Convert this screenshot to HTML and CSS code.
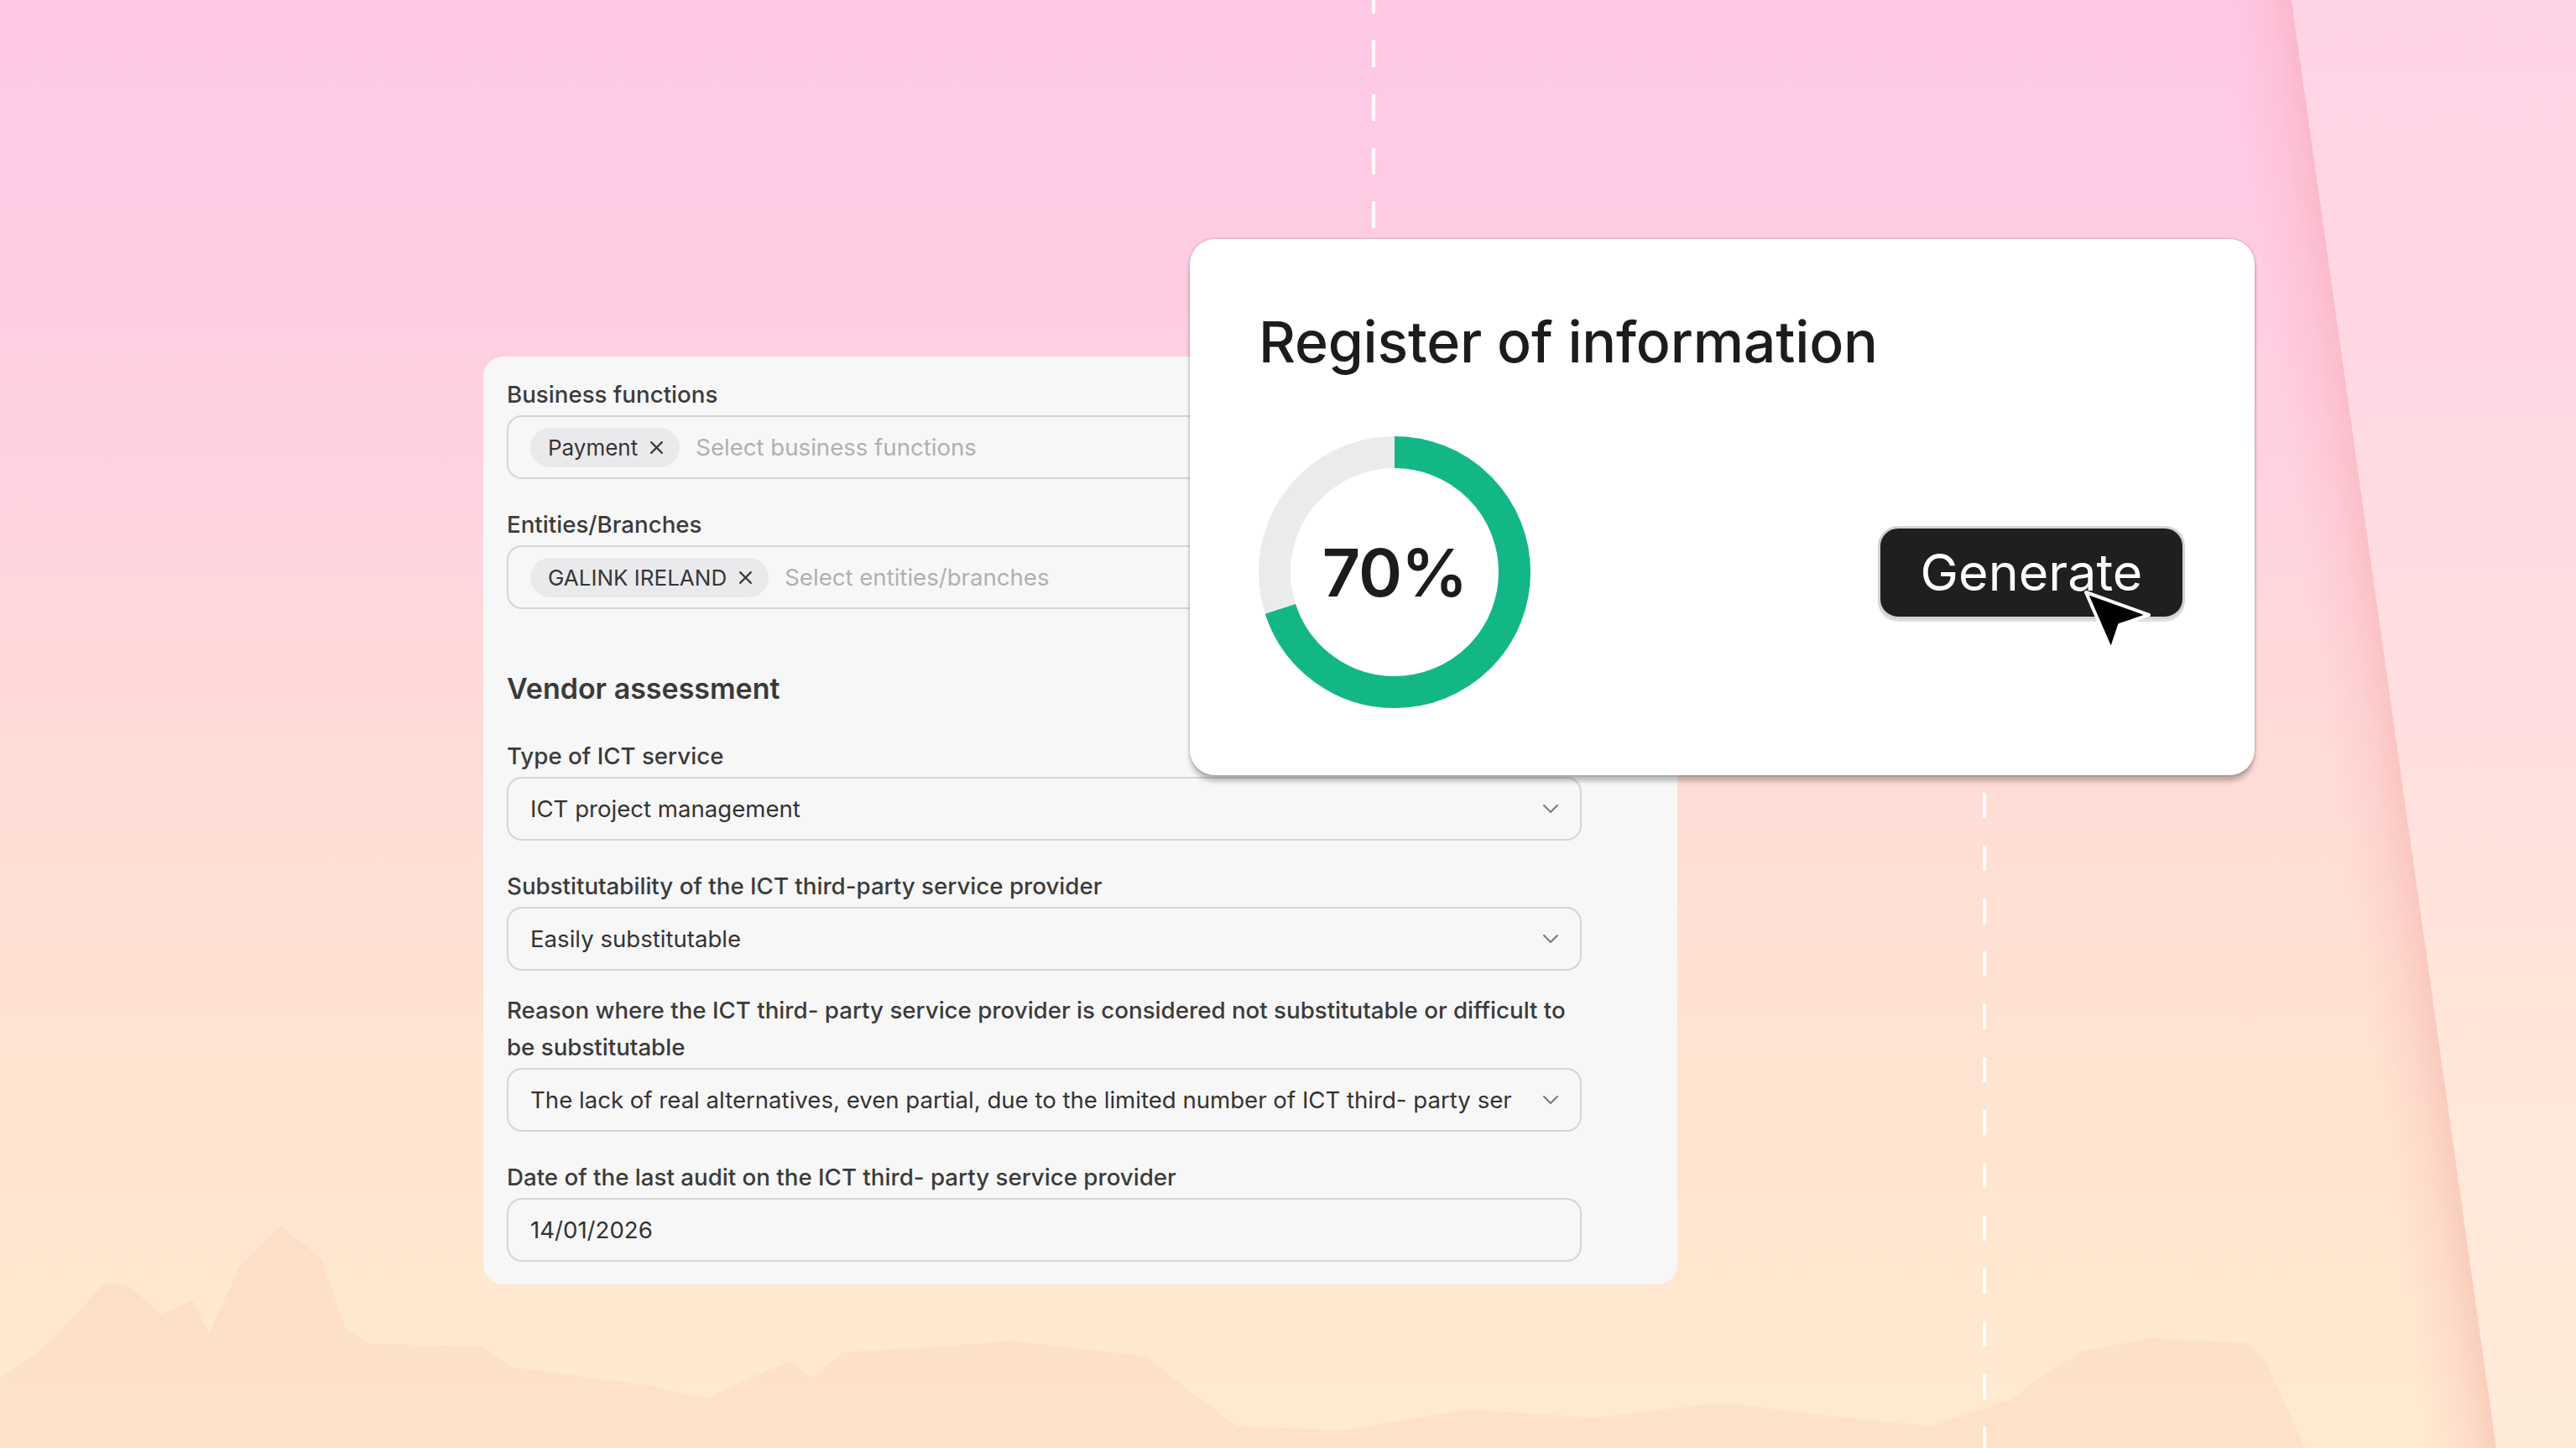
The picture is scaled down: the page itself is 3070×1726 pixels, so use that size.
FILE: index.html
```html
<!DOCTYPE html>
<html lang="en">
<head>
<meta charset="utf-8">
<title>Register of information</title>
<link rel="stylesheet" href="styles.css">
</head>
<body>
<div class="scene">
  <div class="bg-edge"></div>
  <div class="bg-light"></div>
  <svg class="mountains" viewBox="0 0 3070 1726" preserveAspectRatio="none" aria-hidden="true">
    <path d="M0 1643 L57 1602 L124 1530 L153 1532 L191 1567 L230 1550 L249 1590 L287 1507 L335 1462 L383 1500 L411 1583 L440 1602 L574 1605 L612 1630 L766 1650 L842 1667 L900 1640 L943 1622 L967 1643 L1005 1612 L1148 1603 L1206 1598 L1368 1617 L1416 1657 L1474 1700 L1600 1705 L1750 1680 L1900 1690 L2050 1672 L2200 1690 L2300 1700 L2396 1669 L2423 1648 L2480 1611 L2522 1603 L2564 1595 L2679 1601 L2700 1622 L2747 1726 L0 1726 Z"/>
  </svg>
  <div class="dash dash-top"></div>
  <div class="dash dash-bottom"></div>

  <section class="form-panel">
    <div class="field">
      <label class="field-label">Business functions</label>
      <div class="input">
        <span class="chip">Payment
          <svg class="chip-x" viewBox="0 0 16 16"><path d="M2 2 L14 14 M14 2 L2 14"/></svg>
        </span>
        <span class="placeholder">Select business functions</span>
      </div>
    </div>
    <div class="field">
      <label class="field-label">Entities/Branches</label>
      <div class="input">
        <span class="chip">GALINK IRELAND
          <svg class="chip-x" viewBox="0 0 16 16"><path d="M2 2 L14 14 M14 2 L2 14"/></svg>
        </span>
        <span class="placeholder">Select entities/branches</span>
      </div>
    </div>

    <h2 class="section-title">Vendor assessment</h2>

    <div class="field field-first">
      <label class="field-label">Type of ICT service</label>
      <div class="input select">
        <span class="value">ICT project management</span>
        <svg class="chevron" viewBox="0 0 18 10"><path d="M1 1 L9 9 L17 1"/></svg>
      </div>
    </div>
    <div class="field">
      <label class="field-label">Substitutability of the ICT third-party service provider</label>
      <div class="input select">
        <span class="value">Easily substitutable</span>
        <svg class="chevron" viewBox="0 0 18 10"><path d="M1 1 L9 9 L17 1"/></svg>
      </div>
    </div>
    <div class="field field-tight">
      <label class="field-label">Reason where the ICT third- party service provider is considered not substitutable or difficult to be substitutable</label>
      <div class="input select">
        <span class="value">The lack of real alternatives, even partial, due to the limited number of ICT third- party ser</span>
        <svg class="chevron" viewBox="0 0 18 10"><path d="M1 1 L9 9 L17 1"/></svg>
      </div>
    </div>
    <div class="field">
      <label class="field-label">Date of the last audit on the ICT third- party service provider</label>
      <div class="input">
        <span class="value">14/01/2026</span>
      </div>
    </div>
  </section>

  <section class="register-card">
    <h1 class="card-title">Register of information</h1>
    <div class="card-body">
      <div class="donut">
        <svg class="donut-svg" viewBox="0 0 324 324">
          <circle class="donut-track" cx="162" cy="162" r="143"/>
          <circle class="donut-value" cx="162" cy="162" r="143" style="stroke-dasharray: 629 900"/>
        </svg>
        <span class="donut-label">70%</span>
      </div>
      <div class="button-wrap">
        <button class="generate-btn">Generate</button>
        <svg class="cursor" viewBox="0 0 84 78" aria-hidden="true">
          <path d="M4 4 L79 31 L44 43 L34 73 Z"/>
        </svg>
      </div>
    </div>
  </section>
</div>
</body>
</html>
```

FILE: styles.css
```css
* { box-sizing: border-box; }

html, body {
  margin: 0;
  padding: 0;
}

body {
  font-family: "Inter", "Noto Sans", "Liberation Sans", sans-serif;
  color: #333;
}

.scene {
  position: relative;
  width: 3070px;
  height: 1726px;
  overflow: hidden;
  padding: 425px 0 0 576px;
  background: linear-gradient(180deg,
    #ffc9e6 0%,
    #ffcce3 18%,
    #ffd3e0 34%,
    #ffdad9 48%,
    #ffdfd4 62%,
    #ffe5d0 78%,
    #ffead0 100%);
}

/* soft darker band along the left side of the diagonal */
.bg-edge {
  position: absolute;
  left: 2773px;
  top: -20px;
  width: 80px;
  height: 1766px;
  transform-origin: right center;
  transform: rotate(-8.05deg);
  background: linear-gradient(90deg, rgba(245, 150, 170, 0) 0%, rgba(245, 160, 170, 0.18) 60%, rgba(240, 150, 150, 0.32) 100%);
}

.bg-light {
  position: absolute;
  inset: 0;
  background: linear-gradient(180deg, #ffd3e6 0%, #ffd8e4 25%, #ffdfdf 50%, #ffe6d9 70%, #ffebd9 100%);
  clip-path: polygon(2731px 0, 3070px 0, 3070px 1726px, 2975px 1726px);
}

.mountains {
  position: absolute;
  left: 0;
  top: 0;
  width: 3070px;
  height: 1726px;
  fill: #f3b9a8;
  opacity: 0.16;
}

.dash {
  position: absolute;
  width: 4px;
  background: repeating-linear-gradient(180deg, #ffffff 0 32px, transparent 32px 64px);
}

.dash-top {
  left: 1635px;
  top: -16px;
  height: 302px;
}

.dash-bottom {
  left: 2363px;
  top: 945px;
  height: 781px;
  background: repeating-linear-gradient(180deg, #ffffff 0 30px, transparent 30px 63px);
}

/* ---------- Form panel ---------- */

.form-panel {
  position: relative;
  z-index: 2;
  width: 1423px;
  background: #f7f7f7;
  border-radius: 24px;
  padding: 23px 114px 27px 28px;
  display: flex;
  flex-direction: column;
}

.field {
  display: flex;
  flex-direction: column;
  gap: 3px;
  margin-top: 32px;
}

.field:first-child { margin-top: 0; }
.field.field-first { margin-top: 36px; }
.field.field-tight { margin-top: 25px; }

.field-label {
  font-size: 27.7px;
  font-weight: 500;
  line-height: 44px;
  color: #3b3b3b;
}

.section-title {
  margin: 73px 0 0;
  font-size: 34px;
  font-weight: 600;
  line-height: 44px;
  color: #3a3a3a;
}

.input {
  height: 76px;
  border: 2px solid #d5d5d5;
  border-radius: 18px;
  background: #f7f7f7;
  padding: 0 26px;
  display: flex;
  align-items: center;
  gap: 19px;
  font-size: 27.6px;
  color: #333;
  overflow: hidden;
}

.select {
  justify-content: space-between;
  gap: 20px;
  padding-right: 26px;
}

.value {
  white-space: nowrap;
  min-width: 0;
}

.placeholder {
  color: #b3afb1;
  white-space: nowrap;
}

.chip {
  display: inline-flex;
  align-items: center;
  gap: 14px;
  height: 47px;
  padding: 0 19px 0 21px;
  border-radius: 24px;
  background: #eaeaec;
  font-size: 26px;
  color: #363636;
  white-space: nowrap;
}

.chip-x {
  width: 17px;
  height: 17px;
  fill: none;
  stroke: #3a3a3a;
  stroke-width: 2;
  stroke-linecap: round;
}

.chevron {
  flex: none;
  width: 18px;
  height: 10px;
  fill: none;
  stroke: #7a7a7a;
  stroke-width: 2;
  stroke-linecap: round;
  stroke-linejoin: round;
}

/* ---------- Register card ---------- */

.register-card {
  position: absolute;
  z-index: 3;
  left: 1418px;
  top: 285px;
  width: 1269px;
  height: 639px;
  background: #ffffff;
  border-radius: 30px;
  padding: 81px 83px 80px 82px;
  box-shadow: 0 0 0 2px rgba(0, 0, 0, 0.07), 0 8px 6px -1px rgba(0, 0, 0, 0.26);
  display: flex;
  flex-direction: column;
}

.card-title {
  margin: 0;
  font-size: 68px;
  font-weight: 500;
  line-height: 82px;
  color: #1c1c1c;
  letter-spacing: -0.2px;
}

.card-body {
  margin-top: 72px;
  display: flex;
  align-items: center;
  justify-content: space-between;
}

.donut {
  display: grid;
  width: 324px;
  height: 324px;
  place-items: center;
}

.donut > * { grid-area: 1 / 1; }

.donut-svg {
  width: 324px;
  height: 324px;
  transform: rotate(-90deg);
}

.donut-track {
  fill: none;
  stroke: #ebebed;
  stroke-width: 38;
}

.donut-value {
  fill: none;
  stroke: #13b785;
  stroke-width: 38;
}

.donut-label {
  font-size: 79px;
  font-weight: 600;
  color: #1c1c1c;
  letter-spacing: -1px;
}

.button-wrap {
  position: relative;
}

.generate-btn {
  display: block;
  width: 366px;
  height: 111px;
  border: 3px solid #d2d2d2;
  border-radius: 24px;
  background: #1f1f1f;
  color: #ffffff;
  font-family: "Inter", "Noto Sans", "Liberation Sans", sans-serif;
  font-size: 61px;
  font-weight: 400;
  padding: 0;
  box-shadow: 0 3px 0 rgba(0, 0, 0, 0.12);
}

.cursor {
  position: absolute;
  left: 244px;
  top: 75px;
  width: 84px;
  height: 78px;
  fill: #000;
  stroke: #fff;
  stroke-width: 4;
  stroke-linejoin: round;
}
```
